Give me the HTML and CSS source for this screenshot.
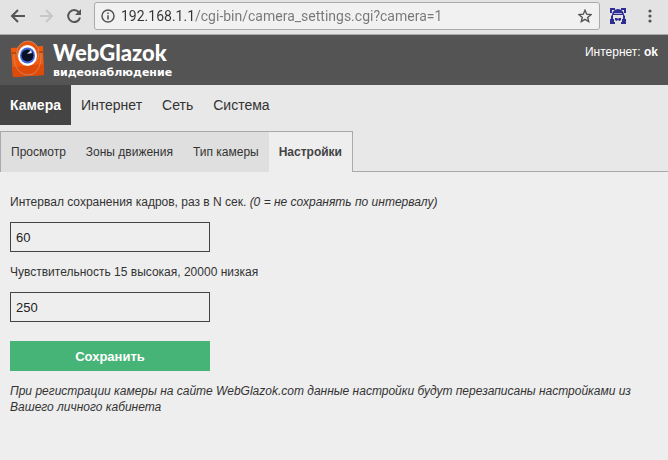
FILE: index.html
```html
<!DOCTYPE html>
<html lang="ru">
<head>
    <meta charset="UTF-8">
    <meta name="viewport" content="width=device-width, initial-scale=1.0">
    <title>WebGlazok - Настройки</title>
    <link rel="stylesheet" href="styles.css">
</head>
<body>

<div class="toolbar">
    <button class="tool" type="button" aria-label="Назад">
        <svg width="16" height="16" viewBox="0 0 16 16" fill="none" stroke="#555" stroke-width="2"><path d="M15 8H2.500M8 2L2 8l6 6"/></svg>
    </button>
    <button class="tool" type="button" aria-label="Вперёд" disabled>
        <svg width="16" height="16" viewBox="0 0 16 16" fill="none" stroke="#c6c6c6" stroke-width="2"><path d="M2 8h11.500M8 2l6 6-6 6"/></svg>
    </button>
    <button class="tool" type="button" aria-label="Обновить">
        <svg width="16" height="16" viewBox="0 0 16 16"><path d="M12.800 4.200A6 6 0 1 0 14 9.500" fill="none" stroke="#555" stroke-width="2"/><path d="M15 1v6H9z" fill="#555"/></svg>
    </button>
    <div class="address">
        <svg width="14" height="14" viewBox="0 0 14 14"><circle cx="7" cy="7" r="6" fill="none" stroke="#555" stroke-width="1.500"/><path d="M6.200 3.500h1.600v1.600H6.200zM6.200 6.200h1.600v4.300H6.200z" fill="#555"/></svg>
        <input class="url" type="text" aria-label="Адрес" value="192.168.1.1/cgi-bin/camera_settings.cgi?camera=1">
        <button class="star" type="button" aria-label="Закладка">
            <svg width="14" height="14" viewBox="0 0 14 14"><path d="M7 1.200l1.700 4 4.300.4-3.300 2.800 1 4.200L7 10.400l-3.700 2.200 1-4.200L1 5.600l4.300-.4z" fill="none" stroke="#555" stroke-width="1.400"/></svg>
        </button>
    </div>
    <button class="extension" type="button" aria-label="Расширение">
        <svg width="16" height="16" viewBox="0 0 16 16" fill="#2e2e92">
            <path d="M0 0h5v2H2v3H0zM11 0h5v5h-2V2h-3zM0 11h4v3h1v2H0zM12 11h4v5h-5v-2h1z"/>
            <path d="M2 7a6 6 0 0 1 12 0l1 1v3h-2V7H3v4H1V8z"/>
            <path d="M5 10h2l1 1 1-1h2v2l-1.500 1L8 12l-1.500 1L5 12z"/>
            <path d="M4 5.500h8" stroke="#a9a9d8"/>
        </svg>
    </button>
    <button class="menu" type="button" aria-label="Меню">
        <svg width="4" height="14" viewBox="0 0 4 14" fill="#555"><circle cx="2" cy="2" r="1.600"/><circle cx="2" cy="7" r="1.600"/><circle cx="2" cy="12" r="1.600"/></svg>
    </button>
</div>

<header class="header">
    <a class="logo" href="#">
        <svg width="35" height="38" viewBox="0 0 35 38">
            <path d="M1 8L33 6l1 29-31 2z" fill="#f4590b"/>
            <path d="M2 27l32-3v11L3 37z" fill="#e04a08"/>
            <ellipse cx="18" cy="13" rx="11" ry="12" fill="#e85209" stroke="#c08a70"/>
            <path d="M4 13c-1 14 6 22 14 22s14-8 13-22" fill="none" stroke="#c9855f"/>
            <path d="M2 13h4M29 12h4" stroke="#8a3410"/>
            <ellipse cx="17.500" cy="15.500" rx="9.500" ry="10.500" fill="#fff"/>
            <ellipse cx="17.500" cy="15.500" rx="7.500" ry="8" fill="#3f68d8"/>
            <circle cx="17.500" cy="15.500" r="6" fill="#0b1026"/>
            <path d="M17 14l4-4 1 3z" fill="#dfe6ff"/>
        </svg>
        <span class="brand">
            <span class="name">WebGlazok</span>
            <span class="slogan">видеонаблюдение</span>
        </span>
    </a>
    <div class="status">Интернет: <b>ok</b></div>
</header>

<nav class="nav">
    <a class="active" href="#">Камера</a>
    <a href="#">Интернет</a>
    <a href="#">Сеть</a>
    <a href="#">Система</a>
</nav>

<nav class="tabs">
    <div class="tabs-list">
        <a href="#">Просмотр</a>
        <a href="#">Зоны движения</a>
        <a href="#">Тип камеры</a>
        <a class="active" href="#">Настройки</a>
    </div>
    <div class="tabs-line"></div>
</nav>

<form class="settings">
    <label for="interval">Интервал сохранения кадров, раз в N сек. <i>(0 = не сохранять по интервалу)</i></label>
    <input type="text" id="interval" value="60">

    <label for="sensitivity">Чувствительность 15 высокая, 20000 низкая</label>
    <input type="text" id="sensitivity" value="250">

    <button class="save" type="submit">Сохранить</button>

    <p class="note">При регистрации камеры на сайте WebGlazok.com данные настройки будут перезаписаны настройками из Вашего личного кабинета</p>
</form>

</body>
</html>
```

FILE: styles.css
```css
* {
    box-sizing: border-box;
}

body {
    margin: 0;
    background: #eee;
    color: #333;
    font: 12px/16px "Liberation Sans", Arial, sans-serif;
}

a {
    color: inherit;
    text-decoration: none;
}

button {
    padding: 0;
    border: 0;
    background: none;
    font-family: inherit;
    cursor: pointer;
}

svg {
    display: block;
}

/* browser bar */
.toolbar {
    display: flex;
    align-items: center;
    gap: 12px;
    height: 35px;
    padding: 0 16px 3px 10px;
    background: #e3e3e3;
    border-bottom: 1px solid #aaa;
}

.address {
    display: flex;
    flex: 1;
    align-items: center;
    gap: 6px;
    height: 28px;
    padding: 0 7px 0 6px;
    background: #f1f1f1;
    border: 1px solid #aaa;
    border-radius: 3px;
}

/* host is darker than the path */
.url {
    flex: 1;
    min-width: 0;
    padding: 0;
    border: 0;
    outline: 0;
    background: linear-gradient(to right, #333 74px, #777 74px);
    -webkit-background-clip: text;
    background-clip: text;
    color: transparent;
    font: 14px/20px Roboto, "Noto Sans", sans-serif;
}

.extension {
    margin-left: -2px;
}

.menu {
    margin-left: 10px;
}

/* header */
.header {
    display: flex;
    justify-content: space-between;
    height: 50px;
    padding: 5px 10px;
    background: #545454;
    color: #fff;
}

.logo {
    display: flex;
    gap: 8px;
}

.brand {
    display: flex;
    flex-direction: column;
}

.name {
    font: 900 22px/26px Lato, sans-serif;
}

.slogan {
    font: bold 11px/13px "DejaVu Sans", sans-serif;
}

.status {
    padding-top: 4px;
}

/* menu */
.nav {
    display: flex;
    height: 46px;
    background: #e8e8e8;
    font-size: 14px;
    line-height: 40px;
}

.nav a {
    height: 40px;
    padding: 0 10px;
}

.nav .active {
    background: #444;
    color: #fff;
    font-weight: bold;
}

.tabs {
    display: flex;
    background: #e8e8e8;
    line-height: 40px;
}

.tabs-list {
    display: flex;
    border: 1px solid #aaa;
    border-bottom: 0;
    background: #dfdfdf;
}

.tabs a {
    padding: 0 10px;
}

.tabs .active {
    background: #eee;
    color: #444;
    font-weight: bold;
}

.tabs-line {
    flex: 1;
    border-bottom: 1px solid #aaa;
}

/* settings */
.settings {
    padding: 22px 10px;
}

.settings label {
    display: block;
}

.settings input {
    display: block;
    width: 200px;
    height: 30px;
    margin: 12px 0;
    padding: 0 5px;
    border: 1px solid #444;
    background: transparent;
    color: #222;
    font: 13px "Liberation Sans", Arial, sans-serif;
}

.save {
    display: block;
    width: 200px;
    height: 30px;
    margin-top: 19px;
    background: #45b476;
    color: #fff;
    font-size: 13px;
    font-weight: bold;
}

.note {
    margin: 12px 0 0;
    font-style: italic;
}
```
